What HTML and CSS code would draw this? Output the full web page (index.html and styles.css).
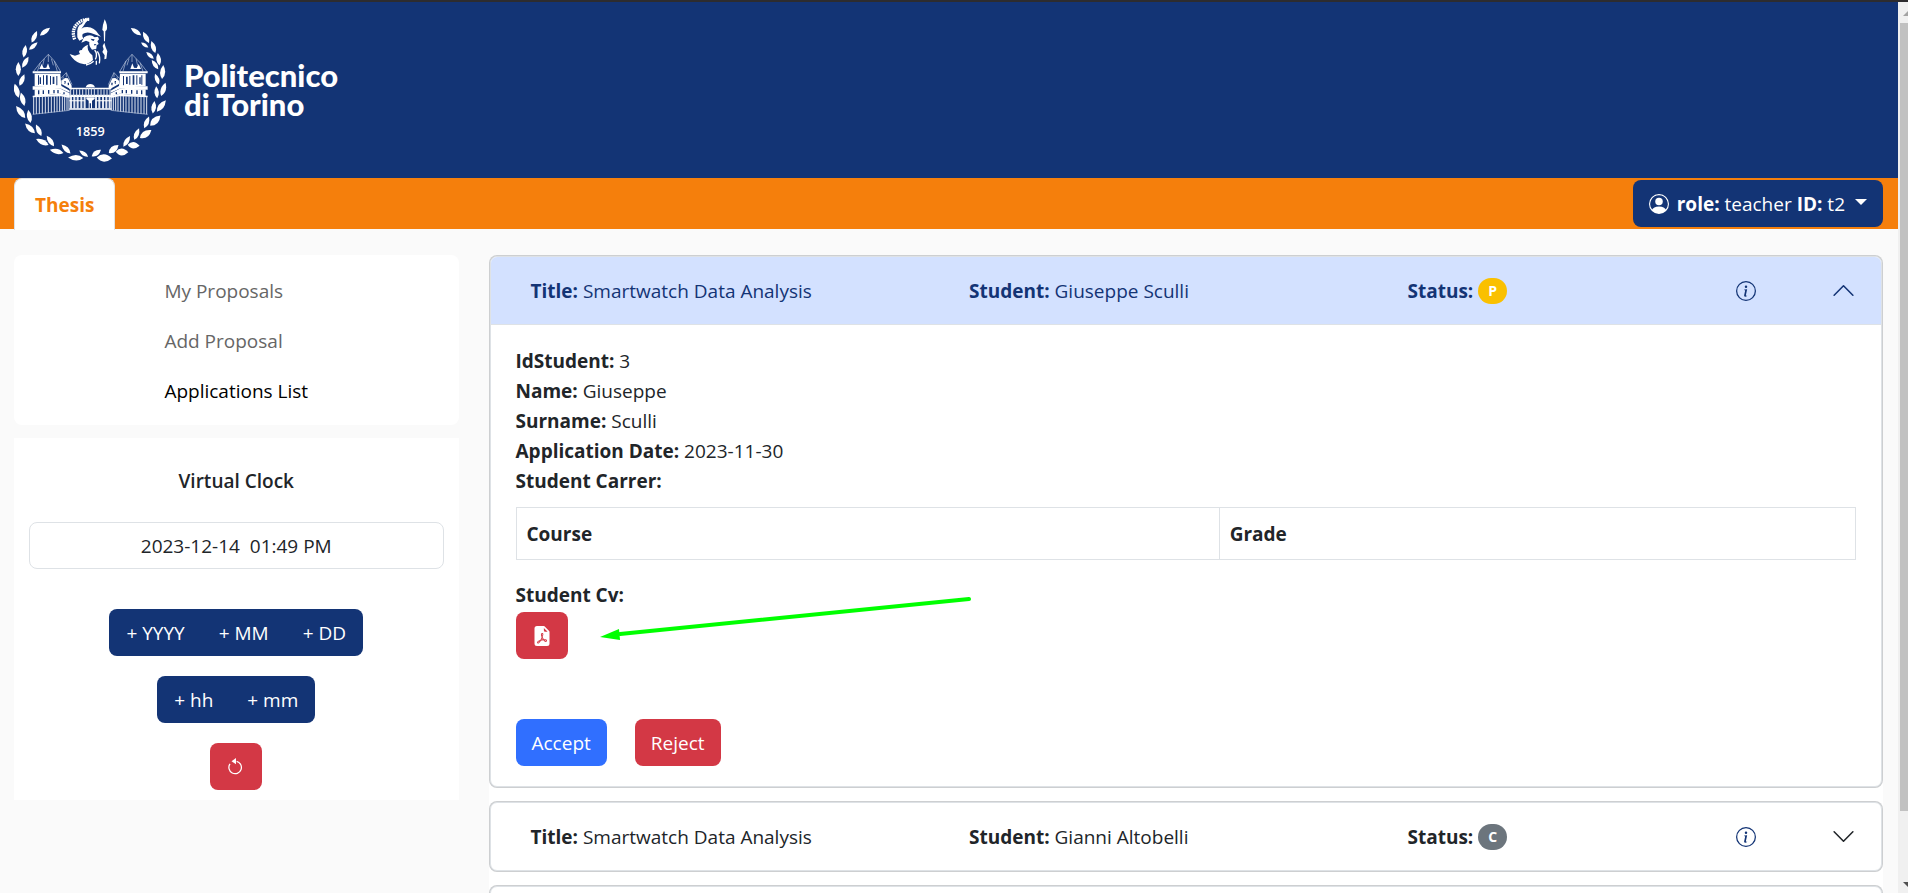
FILE: index.html
```html
<!DOCTYPE html>
<html lang="en">
<head>
<meta charset="utf-8">
<title>Thesis - Politecnico di Torino</title>
<link rel="stylesheet" href="styles.css">
</head>
<body>
<div class="page">
  <header class="brand-bar">
    <svg class="crest" viewBox="42 48 459 444" role="img" aria-label="Politecnico di Torino crest">
      <defs>
        <path id="leaf" d="M-19 0Q-2-14 19 0Q-2 14-19 0Z"/>
        <g id="wing">
          <path class="line" d="M100 215L121 188 145 163 163 183 182 215M145 163V186M121 188L112 214M163 183L172 214M133 176L128 196M154 176L160 196"/>
          <path d="M118 207l7-15 6 12 8-1 5-13 6 17zM98 214h85v6h-85z"/>
          <path fill-rule="evenodd" d="M104 221h77l3 37h-80zM114 226v28h3v-28zM119 232v20h4v-20zM129 226v28h3v-28zM138 226v28h5v-28zM150 228v26h3v-26zM158 230v22h5v-22zM169 228v28h3v-28z"/>
          <path d="M98 259l85-2 26 15v6l-26-12-85 3z"/>
          <path fill-rule="evenodd" d="M104 268l78-2 27 14v10l-27-9-78 8zM114 271v12h4v-12zM128 271v11h4v-11zM144 270v11h4v-11zM160 270v10h4v-10zM172 270v10h4v-10zM190 277v6h4v-6z"/>
          <path d="M98 287l84-6 27 8v5l-27-5-84 3z"/>
          <path class="column" d="M101 290v53M109 290v52M118 290v52M127 290v51M136 290v50M145 290v49M154 289v49M163 289v48M171 288v48M179 288v47M187 289v45M194 290v42M201 291v40M207 292v38"/>
          <path class="line" d="M98 343L209 331"/>
          <path class="line" d="M182 236L199 218 216 254M190 230L187 252M199 218V232M183 240L213 262"/>
          <path fill-rule="evenodd" d="M184 243l11-9 9 1 11 22v12l-31-17zM193 243v8h4v-8zM203 248v8h4v-8z"/>
        </g>
      </defs>
      <g class="ink">
        <use href="#leaf" transform="translate(135 95) rotate(-37)"/>
        <use href="#leaf" transform="translate(103 110) rotate(-65)"/>
        <use href="#leaf" transform="translate(100 138) rotate(-42) scale(.9)"/>
        <use href="#leaf" transform="translate(74 154) rotate(-80)"/>
        <use href="#leaf" transform="translate(76 187) rotate(-60)"/>
        <use href="#leaf" transform="translate(55 207) rotate(-90) scale(1.1)"/>
        <use href="#leaf" transform="translate(66 240) rotate(-68)"/>
        <use href="#leaf" transform="translate(50 272) rotate(-105) scale(1.15)"/>
        <use href="#leaf" transform="translate(68 298) rotate(-105) scale(1.1)"/>
        <use href="#leaf" transform="translate(62 336) rotate(-127) scale(1.2)"/>
        <use href="#leaf" transform="translate(88 349) rotate(-100) scale(1.05)"/>
        <use href="#leaf" transform="translate(90 385) rotate(-135) scale(1.1)"/>
        <use href="#leaf" transform="translate(116 391) rotate(-115)"/>
        <use href="#leaf" transform="translate(127 426) rotate(-154) scale(1.1)"/>
        <use href="#leaf" transform="translate(151 423) rotate(-125)"/>
        <use href="#leaf" transform="translate(170 454) rotate(-167) scale(1.1)"/>
        <use href="#leaf" transform="translate(198 447) rotate(-135)"/>
        <use href="#leaf" transform="translate(227 473) rotate(-178) scale(1.2)"/>
        <use href="#leaf" transform="translate(251 461) rotate(-145) scale(.85)"/>
        <use href="#leaf" transform="translate(408 95) rotate(-145)"/>
        <use href="#leaf" transform="translate(438 112) rotate(-118)"/>
        <use href="#leaf" transform="translate(434 135) rotate(-145) scale(.7)"/>
        <use href="#leaf" transform="translate(460 141) rotate(-108)"/>
        <use href="#leaf" transform="translate(450 166) rotate(-138) scale(.8)"/>
        <use href="#leaf" transform="translate(476 178) rotate(-98)"/>
        <use href="#leaf" transform="translate(465 194) rotate(-125) scale(.9)"/>
        <use href="#leaf" transform="translate(488 216) rotate(-85) scale(1.1)"/>
        <use href="#leaf" transform="translate(471 237) rotate(-110) scale(.9)"/>
        <use href="#leaf" transform="translate(490 268) rotate(-72) scale(1.1)"/>
        <use href="#leaf" transform="translate(470 277) rotate(-95) scale(.95)"/>
        <use href="#leaf" transform="translate(484 318) rotate(-52) scale(1.15)"/>
        <use href="#leaf" transform="translate(461 322) rotate(-82)"/>
        <use href="#leaf" transform="translate(466 362) rotate(-45) scale(1.15 1.4)"/>
        <use href="#leaf" transform="translate(440 367) rotate(-68)"/>
        <use href="#leaf" transform="translate(437 402) rotate(-35) scale(1.1 1.4)"/>
        <use href="#leaf" transform="translate(410 402) rotate(-68)"/>
        <use href="#leaf" transform="translate(401 436) rotate(5) scale(.95 1.4)"/>
        <use href="#leaf" transform="translate(380 424) rotate(-58)"/>
        <use href="#leaf" transform="translate(366 456) rotate(2) scale(1 1.5)"/>
        <use href="#leaf" transform="translate(341 447) rotate(-40) scale(1 1.3)"/>
        <use href="#leaf" transform="translate(313 474) rotate(3) scale(1.2 1.6)"/>
        <use href="#leaf" transform="translate(289 459) rotate(-35) scale(.9 1.1)"/>
        <use href="#wing"/>
        <use href="#wing" transform="translate(541 0) scale(-1 1)"/>
        <path d="M208 263h126v5H208zM257 262q4-10 14-10t14 10zM208 284h126v7H208zM208 325h126v4H208z"/>
        <path class="column" d="M212 268v20M221 268v20M230 268v20M239 268v20M248 268v20M258 264v24M266 264v24M274 264v24M283 264v24M294 268v20M303 268v20M312 268v20M321 268v20M330 268v20"/>
        <path class="column wide" d="M213 291v36M223 291v36M233 291v36M244 291v36M254 291v38M288 291v38M298 291v36M309 291v36M319 291v36M329 291v36"/>
        <path d="M259 292h25v5l-8 5v24h-3v-16h-4v16h-3v-24l-7-5zM208 301h46v3h-46zM289 301h46v3h-46z"/>
        <path class="crest-plume" d="M224 118Q212 88 236 68 250 58 268 58"/>
        <path d="M234 112Q228 90 238 76 252 70 252 58L266 54 268 58Q256 66 252 76L246 84Z"/>
        <path d="M232 112Q230 92 252 82Q280 76 297 104L303 110 283 103Q262 92 248 102Q244 110 250 116L238 122Z"/>
        <path d="M252 112Q270 100 284 112L294 110 297 118 292 124 296 132 290 136 289 146 276 149Q266 138 268 126L258 122 244 128Z"/>
        <path class="shade" d="M272 116l12 2-3 5-6-2zM282 132l8 1-6 4z"/>
        <path d="M264 134Q258 150 277 166L279 180Q262 198 240 190Q220 182 209 162L225 167 240 162Q232 150 246 150Q246 142 264 134Z"/>
        <path class="line bold" d="M284 150Q294 162 286 178M292 154Q302 168 298 190M281 184Q270 194 258 195M289 182V194"/>
        <path d="M314 58Q324 76 320 90L316 94 315 124H312L311 94 307 90Q308 74 314 58ZM308 138l5-10 4 14 5 12-3 22-6 2 1-12-7-10 4-8z"/>
        <text class="crest-year" x="271" y="407" text-anchor="middle">1859</text>
      </g>
    </svg>
    <p class="brand-name">Politecnico<br>di Torino</p>
  </header>

  <nav class="tab-bar">
    <a class="tab" href="#thesis">Thesis</a>
    <button class="role-button" type="button">
      <svg class="icon" viewBox="0 0 16 16" aria-hidden="true"><path d="M11 6a3 3 0 1 1-6 0 3 3 0 0 1 6 0z"/><path fill-rule="evenodd" d="M0 8a8 8 0 1 1 16 0A8 8 0 0 1 0 8zm8-7a7 7 0 0 0-5.468 11.37C3.242 11.226 4.805 10 8 10s4.757 1.225 5.468 2.37A7 7 0 0 0 8 1z"/></svg>
      <span><b>role:</b> teacher <b>ID:</b> t2</span>
      <span class="caret"></span>
    </button>
  </nav>

  <div class="columns">
    <aside class="sidebar">
      <nav class="side-nav">
        <ul>
          <li><a href="#proposals">My Proposals</a></li>
          <li><a href="#add">Add Proposal</a></li>
          <li><a class="current" href="#applications">Applications List</a></li>
        </ul>
      </nav>
      <section class="clock">
        <label class="clock-title" for="clock">Virtual Clock</label>
        <input class="clock-value" id="clock" type="text" readonly value="2023-12-14&nbsp; 01:49 PM">
        <div class="button-group">
          <button type="button">+ YYYY</button><button type="button">+ MM</button><button type="button">+ DD</button>
        </div>
        <div class="button-group">
          <button type="button">+ hh</button><button type="button">+ mm</button>
        </div>
        <button class="button danger square" type="button" aria-label="Reset clock">
          <svg class="icon" viewBox="0 0 16 16" aria-hidden="true"><path class="reset-ring" d="M8.500 3.500a5 5 0 1 1-5.300 2"/><path d="M8 5.800V.8L4.400 3.300z"/></svg>
        </button>
      </section>
    </aside>

    <main class="applications">
      <article class="item">
        <header class="item-head open">
          <span class="cell"><b>Title:</b> Smartwatch Data Analysis</span>
          <span class="cell"><b>Student:</b> Giuseppe Sculli</span>
          <span class="cell status"><b>Status:</b> <span class="badge pending">P</span></span>
          <span class="cell info"><button class="plain" type="button" aria-label="Details"><svg class="icon" viewBox="0 0 16 16" aria-hidden="true"><path d="M8 15A7 7 0 1 1 8 1a7 7 0 0 1 0 14zm0 1A8 8 0 1 0 8 0a8 8 0 0 0 0 16z"/><path d="m8.930 6.588-2.290.287-.082.380.450.083c.294.070.352.176.288.469l-.738 3.468c-.194.897.105 1.319.808 1.319.545 0 1.178-.252 1.465-.598l.088-.416c-.200.176-.492.246-.686.246-.275 0-.375-.193-.304-.533L8.930 6.588zM9 4.500a1 1 0 1 1-2 0 1 1 0 0 1 2 0z"/></svg></button></span>
          <button class="plain" type="button" aria-label="Collapse"><svg class="chevron" viewBox="0 0 16 16" aria-hidden="true"><path d="M2 11l6-6 6 6"/></svg></button>
        </header>
        <div class="item-body">
          <p><b>IdStudent:</b> 3</p>
          <p><b>Name:</b> Giuseppe</p>
          <p><b>Surname:</b> Sculli</p>
          <p><b>Application Date:</b> 2023-11-30</p>
          <p><b>Student Carrer:</b></p>
          <table class="career">
            <thead><tr><th class="course" scope="col">Course</th><th scope="col">Grade</th></tr></thead>
          </table>
          <div class="cv">
            <p><b>Student Cv:</b></p>
            <button class="button danger square" type="button" aria-label="Open student CV">
              <svg class="icon" viewBox="0 0 16 16" aria-hidden="true"><path d="M5.523 12.424c.140-.082.293-.162.459-.238a7.878 7.878 0 0 1-.450.606c-.280.337-.498.516-.635.572a.266.266 0 0 1-.035.012.282.282 0 0 1-.026-.044c-.056-.110-.054-.216.040-.360.106-.165.319-.354.647-.548zm2.455-1.647c-.119.025-.237.050-.356.078a21.148 21.148 0 0 0 .500-1.050 12.045 12.045 0 0 0 .510.858c-.217.032-.436.070-.654.114zm2.525.939a3.881 3.881 0 0 1-.435-.410c.228.005.434.022.612.054.317.057.466.147.518.209a.095.095 0 0 1 .026.064.436.436 0 0 1-.060.200.307.307 0 0 1-.094.124.107.107 0 0 1-.069.015c-.090-.003-.258-.066-.498-.256zM8.278 6.970c-.040.244-.108.524-.200.829a4.860 4.860 0 0 1-.089-.346c-.076-.353-.087-.630-.046-.822.038-.177.110-.248.196-.283a.517.517 0 0 1 .145-.040c.013.030.028.092.032.198.005.122-.007.277-.038.465z"/><path fill-rule="evenodd" d="M4 0h5.293A1 1 0 0 1 10 .293L13.707 4a1 1 0 0 1 .293.707V14a2 2 0 0 1-2 2H4a2 2 0 0 1-2-2V2a2 2 0 0 1 2-2zm5.500 1.500v2a1 1 0 0 0 1 1h2l-3-3zM4.165 13.668c.090.180.230.343.438.419.207.075.412.040.580-.030.318-.130.635-.436.926-.786.333-.401.683-.927 1.021-1.510a11.651 11.651 0 0 1 1.997-.406c.300.383.610.713.910.950.280.220.603.403.934.417a.856.856 0 0 0 .510-.138c.155-.101.270-.247.354-.416.090-.181.145-.370.138-.563a.844.844 0 0 0-.200-.518c-.226-.270-.596-.400-.960-.465a5.760 5.760 0 0 0-1.335-.050 10.954 10.954 0 0 1-.980-1.686c.250-.660.437-1.284.520-1.794.036-.218.055-.426.048-.614a1.238 1.238 0 0 0-.127-.538.700.700 0 0 0-.477-.365c-.202-.043-.410 0-.601.077-.377.150-.576.470-.651.823-.073.340-.040.736.046 1.136.088.406.238.848.430 1.295a19.697 19.697 0 0 1-1.062 2.227 7.662 7.662 0 0 0-1.482.645c-.370.220-.699.480-.897.787-.210.326-.275.714-.080 1.103z"/></svg>
            </button>
            <svg class="pointer" viewBox="0 0 376 48" aria-hidden="true"><path class="pointer-line" d="M369 5L20 40"/><path d="M0 43L19 35 20 46z"/></svg>
          </div>
          <div class="actions">
            <button class="button primary" type="button">Accept</button>
            <button class="button danger" type="button">Reject</button>
          </div>
        </div>
      </article>
      <article class="item">
        <header class="item-head">
          <span class="cell"><b>Title:</b> Smartwatch Data Analysis</span>
          <span class="cell"><b>Student:</b> Gianni Altobelli</span>
          <span class="cell status"><b>Status:</b> <span class="badge cancelled">C</span></span>
          <span class="cell info"><button class="plain" type="button" aria-label="Details"><svg class="icon" viewBox="0 0 16 16" aria-hidden="true"><path d="M8 15A7 7 0 1 1 8 1a7 7 0 0 1 0 14zm0 1A8 8 0 1 0 8 0a8 8 0 0 0 0 16z"/><path d="m8.930 6.588-2.290.287-.082.380.450.083c.294.070.352.176.288.469l-.738 3.468c-.194.897.105 1.319.808 1.319.545 0 1.178-.252 1.465-.598l.088-.416c-.200.176-.492.246-.686.246-.275 0-.375-.193-.304-.533L8.930 6.588zM9 4.500a1 1 0 1 1-2 0 1 1 0 0 1 2 0z"/></svg></button></span>
          <button class="plain" type="button" aria-label="Expand"><svg class="chevron" viewBox="0 0 16 16" aria-hidden="true"><path d="M2 5l6 6 6-6"/></svg></button>
        </header>
      </article>
      <article class="item"><header class="item-head"></header></article>
    </main>
  </div>
</div>
<div class="scroll-track" aria-hidden="true">
  <svg class="scroll-arrow" viewBox="2 0 8 21"><path class="arrow-up" d="M5 14h10l-5-5z"/></svg>
  <div class="scroll-thumb"></div>
  <div class="scroll-rest"></div>
  <svg class="scroll-arrow" viewBox="2 0 8 21"><path class="arrow-down" d="M5 10h10l-5 5z"/></svg>
</div>
</body>
</html>
```

FILE: styles.css
```css
* { box-sizing: border-box; }

body {
  margin: 0;
  height: 100vh;
  overflow: hidden;
  display: flex;
  border-top: 2px solid #2d2c2f;
  background: #fafafa;
  color: #212529;
  font: 19px/30px "Open Sans", "Noto Sans", sans-serif;
}

p, ul { margin: 0; padding: 0; }
a { text-decoration: none; }
button, input { font: inherit; }
button { border: 0; cursor: pointer; }
svg { display: block; }

.page { flex: 1; min-width: 0; overflow: hidden; }

/* Header */
.brand-bar {
  display: flex;
  align-items: center;
  gap: 17px;
  padding: 14px;
  background: #133475;
}
.crest { width: 153px; height: 148px; }
.ink { fill: #fff; }
.line { fill: none; stroke: #b9c5dc; stroke-width: 2; }
.line.bold { stroke: #fff; stroke-width: 4; }
.column { fill: none; stroke: #dfe5f0; stroke-width: 3; }
.column.wide { stroke-width: 6; }
.crest-plume { fill: none; stroke: #fff; stroke-width: 10; stroke-dasharray: 5 2; }
.shade { fill: #133475; }
.crest-year { font: 600 38px "Open Sans", sans-serif; }
.brand-name { color: #fff; font: 900 31px/29px Lato, sans-serif; }

/* Tabs */
.tab-bar {
  display: flex;
  justify-content: space-between;
  align-items: center;
  height: 51px;
  padding: 0 15px 0 14px;
  background: #f57f0c;
}
.tab {
  align-self: flex-start;
  padding: 11px 20px 10px;
  border: 1px solid #dee2e6;
  border-bottom: 0;
  border-radius: 8px 8px 0 0;
  background: #fff;
  color: #f57f0c;
  font-weight: 700;
}
.role-button {
  display: flex;
  align-items: center;
  gap: 8px;
  height: 47px;
  padding: 0 16px;
  border-radius: 8px;
  background: #133475;
  color: #fff;
}
.icon { width: 20px; height: 20px; fill: currentColor; }
.caret {
  margin: 0 0 3px 2px;
  border: 6px solid transparent;
  border-top-color: #fff;
  border-bottom: 0;
}

/* Columns */
.columns { display: flex; padding-top: 26px; }
.sidebar {
  flex: 0 0 25%;
  padding: 0 16px 0 14px;
  display: flex;
  flex-direction: column;
  gap: 13px;
}
.side-nav {
  display: flex;
  justify-content: center;
  padding: 11px 10px 9px;
  border-radius: 8px;
  background: #fff;
}
.side-nav ul { list-style: none; }
.side-nav a { display: block; padding: 10px 0; color: #666; }
.side-nav .current { color: #000; }

.clock {
  display: flex;
  flex-direction: column;
  align-items: center;
  gap: 20px;
  padding: 28px 15px 10px;
  background: #fff;
}
.clock-title { font-weight: 600; margin-bottom: 6px; }
.clock-value {
  width: 100%;
  height: 47px;
  margin-bottom: 20px;
  border: 1px solid #dee2e6;
  border-radius: 8px;
  background: #fff;
  color: #212529;
  text-align: center;
}
.button-group {
  display: flex;
  overflow: hidden;
  border-radius: 8px;
  background: #133475;
}
.button-group button { height: 47px; padding: 0 17px; background: none; color: #fff; }

.button {
  height: 47px;
  padding: 0 16px;
  border-radius: 8px;
  color: #fff;
}
.primary { background: #306fff; }
.danger { background: #d33845; }
.square { width: 52px; }
.reset-ring { fill: none; stroke: currentColor; }

/* Applications */
.applications {
  flex: 1;
  min-width: 0;
  margin: 0 15px 0 14px;
  padding: 1px;
  display: flex;
  flex-direction: column;
  gap: 15px;
  background: #fff;
  border-radius: 8px 8px 0 0;
}
.item {
  border: 1px solid #dee2e6;
  border-radius: 7px;
  background: #fff;
  box-shadow: 0 0 0 1px #cdcfd1;
}
.item-head {
  display: grid;
  grid-template-columns: minmax(0, 4fr) minmax(0, 4fr) minmax(0, 3fr) minmax(0, 1fr) auto;
  align-items: center;
  height: 67px;
  padding: 0 25px;
}
.item-head.open {
  border-radius: 6px 6px 0 0;
  background: #d3e1ff;
  color: #133475;
}
.cell { padding: 0 15px; white-space: nowrap; }
.info { display: flex; }
.status { display: flex; align-items: center; gap: 5px; }
.plain { padding: 0; background: none; color: #133475; }
.chevron { width: 25px; height: 25px; fill: none; stroke: #212529; stroke-linecap: round; stroke-linejoin: round; }
.open .chevron { stroke: #133475; }
.badge {
  padding: 5px 10px;
  border-radius: 13px;
  color: #fff;
  font-size: 14px;
  line-height: 16px;
  font-weight: 700;
}
.pending { background: #fac000; }
.cancelled { background: #6c757d; }

.item-body { padding: 21px 25px 20px; border-top: 1px solid #dee2e6; }
.career {
  width: 100%;
  margin: 11px 0 20px;
  border-collapse: collapse;
}
.career th {
  padding: 11px 10px 10px;
  border: 1px solid #dee2e6;
  text-align: left;
}
.course { width: 52.5%; }
.cv { position: relative; }
.cv .square { margin-top: 2px; padding-left: 16px; }
.pointer {
  position: absolute;
  left: 84px;
  top: 14px;
  width: 376px;
  height: 48px;
  fill: #0f0;
}
.pointer-line { stroke: #0f0; stroke-width: 4; stroke-linecap: round; }
.actions { display: flex; gap: 28px; margin-top: 52px; }

/* Scroll bar */
.scroll-track {
  flex: 0 0 10px;
  display: flex;
  flex-direction: column;
  padding-left: 2px;
  background: #f0f0f0;
}
.scroll-arrow { width: 8px; height: 21px; }
.arrow-up { fill: #a3a3a3; }
.arrow-down { fill: #505050; }
.scroll-thumb { flex: 788; background: #c1c1c1; }
.scroll-rest { flex: 61; }
```
